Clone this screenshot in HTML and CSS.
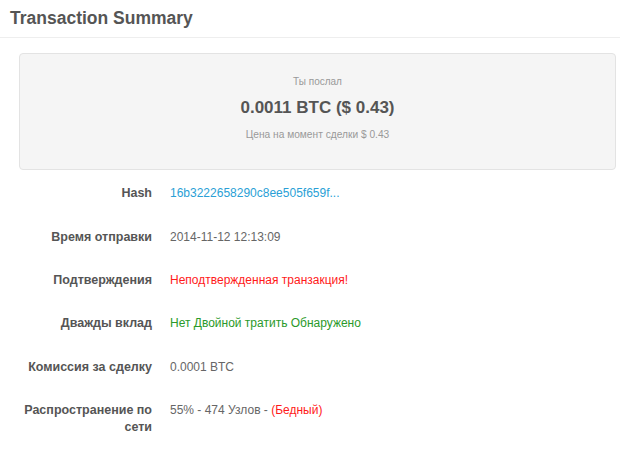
FILE: index.html
```html
<!DOCTYPE html>
<html lang="ru">
<head>
<meta charset="utf-8">
<title>Transaction Summary</title>
<link rel="stylesheet" href="styles.css">
</head>
<body>
<div class="header">
  <h1 class="title">Transaction Summary</h1>
</div>
<div class="content">
  <div class="well">
    <div class="well-label">Ты послал</div>
    <div class="well-amount">0.0011 BTC ($ 0.43)</div>
    <div class="well-note">Цена на момент сделки $ 0.43</div>
  </div>
  <dl class="details">
    <div class="row">
      <dt class="label">Hash</dt>
      <dd class="value"><a class="link" href="#">16b3222658290c8ee505f659f...</a></dd>
    </div>
    <div class="row">
      <dt class="label">Время отправки</dt>
      <dd class="value">2014-11-12 12:13:09</dd>
    </div>
    <div class="row">
      <dt class="label">Подтверждения</dt>
      <dd class="value danger">Неподтвержденная транзакция!</dd>
    </div>
    <div class="row">
      <dt class="label">Дважды вклад</dt>
      <dd class="value success">Нет Двойной тратить Обнаружено</dd>
    </div>
    <div class="row">
      <dt class="label">Комиссия за сделку</dt>
      <dd class="value">0.0001 BTC</dd>
    </div>
    <div class="row">
      <dt class="label">Распространение по сети</dt>
      <dd class="value">55% - 474 Узлов - <span class="danger">(Бедный)</span></dd>
    </div>
  </dl>
</div>
</body>
</html>
```
FILE: styles.css
```css
html, body {
  margin: 0;
  padding: 0;
  background: #fff;
  font-family: "Liberation Sans", Arial, sans-serif;
  color: #666;
}
.header {
  height: 38px;
  border-bottom: 1px solid #eeeeee;
  padding: 0 10px;
  box-sizing: border-box;
  display: flex;
  align-items: center;
}
.title {
  margin: 0;
  font-size: 17.5px;
  font-weight: bold;
  color: #555;
  line-height: 20px;
  margin-top: -2px;
}
.content {
  padding: 15px 4px 0 19px;
}
.well {
  background: #f5f5f5;
  border: 1px solid #e3e3e3;
  border-radius: 4px;
  text-align: center;
  padding: 21px 0 27px;
}
.well-label {
  font-size: 10px;
  line-height: 14px;
  color: #999;
}
.well-amount {
  font-size: 17px;
  font-weight: bold;
  line-height: 20px;
  color: #555;
  margin-top: 9px;
}
.well-note {
  font-size: 10.2px;
  line-height: 14px;
  color: #999;
  margin-top: 10px;
}
.details {
  margin: 2px 0 0 -19px;
  padding: 0;
}
.row {
  display: flex;
  gap: 18px;
  padding: 13.2px 0;
  font-size: 12px;
  line-height: 17px;
}
.label {
  width: 152px;
  flex: none;
  text-align: right;
  font-weight: bold;
  font-size: 12.5px;
  color: #555;
  margin: 0;
}
.value {
  margin: 0;
  color: #666;
}
.link {
  color: #2a9fd6;
  text-decoration: none;
}
.danger {
  color: #ff1a1a;
}
.success {
  color: #2a9a2a;
}
```
